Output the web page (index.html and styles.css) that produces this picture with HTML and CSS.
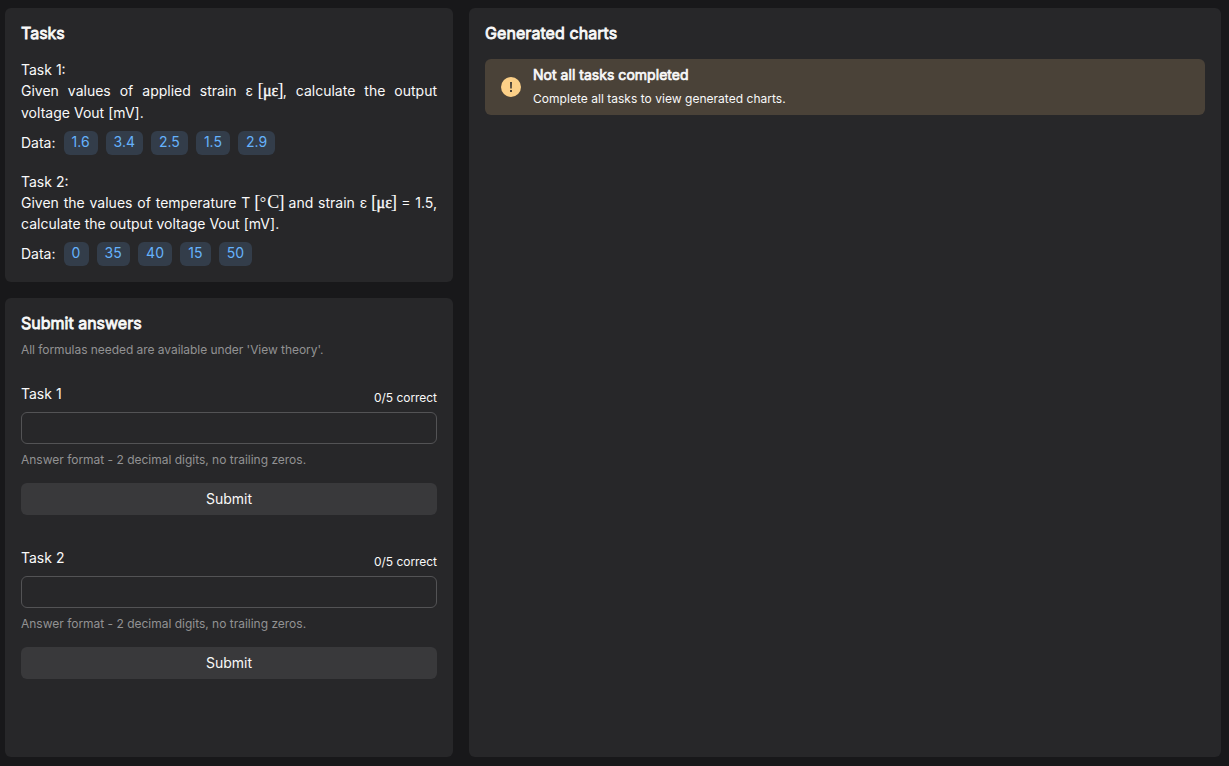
FILE: index.html
```html
<!DOCTYPE html>
<html lang="en">
<head>
<meta charset="utf-8">
<title>Tasks</title>
<link rel="stylesheet" href="styles.css">
</head>
<body>
<main class="layout">
  <div class="side">
    <section class="panel tasks">
      <h2 class="title">Tasks</h2>
      <article class="task">
        <div class="task-name">Task 1:</div>
        <p class="task-text"><span class="line">Given values of applied strain <span class="pair">ε <span class="math"><span class="bracket">[</span><span class="greek">με</span><span class="bracket">]</span></span>,</span> calculate the output</span><span class="line last">voltage Vout [mV].</span></p>
        <div class="data">Data: <span class="tag">1.6</span><span class="tag">3.4</span><span class="tag">2.5</span><span class="tag">1.5</span><span class="tag">2.9</span></div>
      </article>
      <article class="task second">
        <div class="task-name">Task 2:</div>
        <p class="task-text"><span class="line">Given the values of temperature T <span class="math"><span class="bracket">[</span><span class="unit"><span class="degree">°</span>C</span><span class="bracket">]</span></span> and strain ε <span class="math"><span class="bracket">[</span><span class="greek">με</span><span class="bracket">]</span></span> = 1.5,</span><span class="line last">calculate the output voltage Vout [mV].</span></p>
        <div class="data">Data: <span class="tag">0</span><span class="tag">35</span><span class="tag">40</span><span class="tag">15</span><span class="tag">50</span></div>
      </article>
    </section>
    <section class="panel answers">
      <h2 class="title">Submit answers</h2>
      <p class="hint">All formulas needed are available under 'View theory'.</p>
      <form class="answer">
        <div class="answer-head"><label for="a1">Task 1</label><span class="score">0/5 correct</span></div>
        <input class="field" id="a1" type="text">
        <p class="format">Answer format - 2 decimal digits, no trailing zeros.</p>
        <button class="submit" type="button">Submit</button>
      </form>
      <form class="answer">
        <div class="answer-head"><label for="a2">Task 2</label><span class="score">0/5 correct</span></div>
        <input class="field" id="a2" type="text">
        <p class="format">Answer format - 2 decimal digits, no trailing zeros.</p>
        <button class="submit" type="button">Submit</button>
      </form>
    </section>
  </div>
  <section class="panel charts">
    <h2 class="title">Generated charts</h2>
    <div class="alert">
      <svg class="alert-icon" viewBox="0 0 20 20" width="20" height="20"><circle cx="10" cy="10" r="10" fill="#fcd088"/><path d="M9 5h2l-.2 6.5H9.2zM9 13h2v1.9H9z" fill="#4a4238"/></svg>
      <div class="alert-body">
        <h3 class="alert-title">Not all tasks completed</h3>
        <p class="alert-text">Complete all tasks to view generated charts.</p>
      </div>
    </div>
  </section>
</main>
</body>
</html>
```

FILE: styles.css
```css
* { box-sizing: border-box; }
body {
  margin: 0;
  height: 766px;
  overflow: hidden;
  background: #18181a;
  color: #f9f9f9;
  font: 14px/20px Inter, sans-serif;
}
h2, h3, p { margin: 0; }
.layout {
  display: grid;
  grid-template-columns: 448px 752px;
  gap: 16px;
  height: 766px;
  padding: 8px 8px 9px 5px;
}
.side { display: grid; grid-template-rows: 274px 1fr; gap: 16px; }
.panel { padding: 15px 16px 16px; border-radius: 6px; background: #272729; }
.title {
  font-size: 16px;
  line-height: 20px;
  font-weight: 400;
  -webkit-text-stroke: 0.8px;
}
.charts .title { letter-spacing: 0.07px; }
.task { padding-top: 17px; }
.task-text { line-height: 22px; }
.line { display: block; text-align: justify; text-align-last: justify; height: 22px; white-space: nowrap; }
.line.last { text-align-last: left; letter-spacing: 0.02px; }
.pair { display: inline-block; text-align-last: left; word-spacing: 1.5px; }
.second .line { height: 21px; }
.second .data { margin-top: 8px; }
.second .tag { letter-spacing: 0.15px; }
.math { font: 16px/1 "Liberation Serif", serif; }
.bracket { display: inline-block; width: 4.5px; font-size: 19px; line-height: 1; text-indent: -1px; }
.greek { -webkit-text-stroke: 0.4px; }
.unit { font-size: 18px; }
.degree { font-size: 16px; margin-right: 1px; }
.data { display: flex; align-items: center; gap: 8px; height: 24px; margin-top: 7px; }
.tag {
  height: 24px;
  padding: 1px 8px;
  border-radius: 6px;
  background: #333d4a;
  color: #65b2fc;
}
.hint, .format { font-size: 12px; line-height: 16px; color: #929293; }
.hint { margin-top: 9px; letter-spacing: -0.05px; }
.answer { padding-top: 26px; }
.answer + .answer { padding-top: 33px; }
.answer-head { display: flex; justify-content: space-between; height: 28px; }
.score { font-size: 12px; line-height: 28px; letter-spacing: -0.04px; }
.field {
  display: block;
  width: 100%;
  height: 32px;
  border: 1px solid #535355;
  border-radius: 6px;
  background: transparent;
}
.format { margin-top: 8px; letter-spacing: -0.01px; }
.submit {
  display: block;
  width: 100%;
  height: 32px;
  margin-top: 15px;
  border: 0;
  border-radius: 6px;
  background: #39393b;
  color: inherit;
  font: inherit;
}
.alert {
  display: flex;
  align-items: center;
  gap: 12px;
  height: 56px;
  margin-top: 16px;
  padding: 0 16px;
  border-radius: 6px;
  background: #4a4238;
}
.alert-title { font-size: 14px; line-height: 20px; font-weight: 400; letter-spacing: 0.03px; -webkit-text-stroke: 0.7px; }
.alert-text { margin-top: 4px; font-size: 12px; line-height: 20px; letter-spacing: 0.03px; }
```
